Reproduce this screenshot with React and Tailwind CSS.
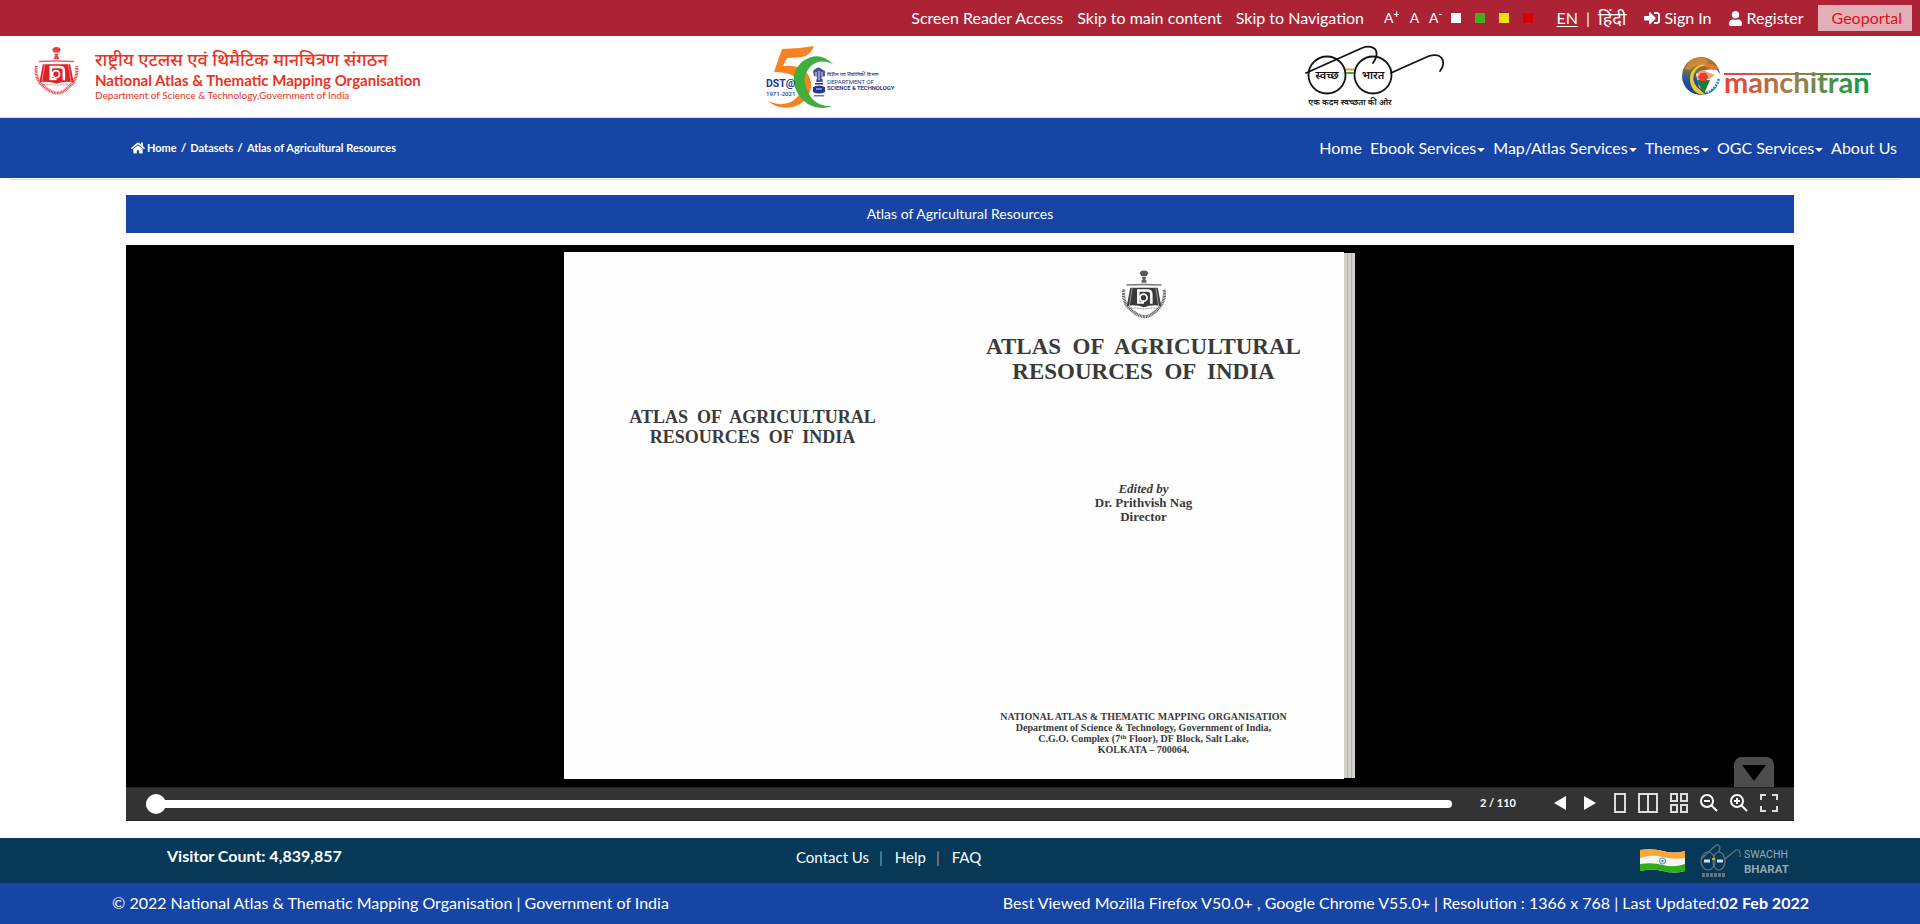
import { useState } from "react";
import { FaHome, FaSignInAlt, FaUser } from "react-icons/fa";

const uiFont = "font-['Lato','Noto_Sans',sans-serif]";
const bookFont = "font-['Liberation_Serif',serif]";

function Emblem({ className, color }) {
  return (
    <svg viewBox="0 0 46 50" className={className} aria-hidden="true">
      <g fill={color}>
        <path d="M19.500 1.500q3.500-2 7 0l.8 2-1.500 2.500h-5.600l-1.500-2.500z" opacity=".85" />
        <path d="M21 7h4v1.500l-.8 1 1.300 1.500v2h-5v-2l1.300-1.500-.8-1z" opacity=".8" />
        <path d="M5 14.500q18-1 36 0v1.500q-18-.8-36 0z" opacity=".7" />
        <path d="M9 18h28l3.500 18.500q-10-1.500-17.500 1.500-7.500-3-17.500-1.500z" />
      </g>
      <path d="M11 18 8 36.500M35 18 38 36.500" stroke="#fff" strokeWidth=".7" fill="none" opacity=".7" />
      <path d="M9 39q8-.5 14 1 6-1.500 14-1" stroke={color} strokeWidth=".8" fill="none" strokeDasharray="2 1" opacity=".7" />
      <path d="M16 21h10.500q4 0 4 4V34.500" stroke="#fff" strokeWidth="2.600" fill="none" />
      <path d="M17.200 20v14" stroke="#fff" strokeWidth="2.600" />
      <path d="M16 33.300h7" stroke="#fff" strokeWidth="2.200" />
      <circle cx="22.500" cy="28.200" r="3.600" fill={color} stroke="#fff" strokeWidth="1.800" />
      <path
        d="M2.500 20q-2 12 6 19.500T23 47.500t14.500-8T43.500 20"
        fill="none"
        stroke={color}
        strokeWidth="3.200"
        strokeDasharray="1 .6"
        opacity=".85"
      />
    </svg>
  );
}

function DstLogo() {
  return (
    <svg viewBox="0 0 130 64" className="h-16 w-[130px]" role="img" aria-label="DST 50 years">
      <path d="M16 3Q32 3 48 0 45 9 36 11L21 12l-4 8q24-2 28 16 1 19-18 25-15 3-25-6 10 5 20 2 14-5 12-17Q32 26 8 26z" fill="#f68222" />
      <path d="M67 18Q53 4 37 15 22 28 31 46q8 15 25 16 6 0 10-2-16 1-23-12-9-16 1-27 9-9 23-3z" fill="#3fae3b" />
      <g fill="#26378b" className="font-['Roboto',sans-serif]">
        <text x="0" y="41" fontSize="10.500" fontWeight="700">DST@</text>
        <text x="0" y="50" fontSize="6" fontWeight="500">1971-2021</text>
        <text x="61" y="30" fontSize="5" fontWeight="500" className="font-['Noto_Sans',sans-serif]">विज्ञान एवं प्रौद्योगिकी विभाग</text>
        <text x="61" y="38" fontSize="6">DEPARTMENT OF</text>
        <text x="61" y="44" fontSize="5.800" fontWeight="700">SCIENCE &amp; TECHNOLOGY</text>
        <path d="M48 24q4-5 9 0l2 1v5l-3 1 1 5h-7l1-5-3-1-1-5z" opacity=".85" />
        <rect x="49" y="37" width="8" height="1.500" />
        <path d="M47 41q6-3 12 0v5q-6 3-12 0z" />
        <rect x="48" y="49" width="10" height="1.500" opacity=".7" />
      </g>
      <path d="M50 26v7M53 25v9M56 26v7M50 43h6" stroke="#fff" strokeWidth=".8" />
    </svg>
  );
}

function SwachhGlasses() {
  return (
    <svg viewBox="0 0 144 64" className="h-16 w-36" role="img" aria-label="Swachh Bharat">
      <g fill="none" stroke="#111" strokeWidth="1.800" strokeLinecap="round">
        <circle cx="22" cy="30" r="18.500" />
        <circle cx="68" cy="30" r="18.500" />
        <path d="M1 28 57 3q8-3 13 1 4 5-2 14" />
        <path d="M86 28q22-10 38-17 12-3 14 5 1 5-3 10" />
      </g>
      <path d="M41 24.500h8" stroke="#f7941d" strokeWidth="2" />
      <path d="M41 28h8" stroke="#39a94a" strokeWidth="2" />
      <g className="font-['Noto_Sans',sans-serif]" fill="#111" textAnchor="middle">
        <text x="22" y="34" fontSize="11" fontWeight="600">स्वच्छ</text>
        <text x="68" y="34" fontSize="11" fontWeight="600">भारत</text>
        <text x="45" y="60" fontSize="8.300" fontWeight="600">एक कदम स्वच्छता की ओर</text>
      </g>
    </svg>
  );
}

function Manchitran() {
  return (
    <svg viewBox="0 0 192 42" className="h-[42px] w-48" role="img" aria-label="Manchitran">
      <defs>
        <linearGradient id="mc" x1="44" x2="190" y1="0" y2="0" gradientUnits="userSpaceOnUse">
          <stop offset="0" stopColor="#ee3e3e" />
          <stop offset=".45" stopColor="#a08048" />
          <stop offset="1" stopColor="#0a9a48" />
        </linearGradient>
        <linearGradient id="globe" x1="0" x2="0" y1="0" y2="1">
          <stop offset="0" stopColor="#c0702a" />
          <stop offset=".35" stopColor="#76703f" />
          <stop offset=".6" stopColor="#1c57a5" />
          <stop offset="1" stopColor="#123f8a" />
        </linearGradient>
      </defs>
      <circle cx="20" cy="20" r="19" fill="url(#globe)" />
      <path d="M8 6q8-5 16-4l4 5-8 4-6-1-5 4-5-1z" fill="#c98a3c" />
      <path d="M36 12Q22 6 15 14q-6 9 1 17l9 8q-14 0-16-14-1-9 6-14 9-6 21 1z" fill="#f7c52b" />
      <path d="M24 8q8-2 13 4l-3 3-10-4z" fill="#e8752b" />
      <path d="M15 18q8-6 21-4l4 6-3 9-11 9-8-7z" fill="#fff" />
      <path d="M17 16q6-4 9 0l8 3-6 4-12 1z" fill="#f0a070" />
      <path d="M15 24h14l-6 14z" fill="#1e7c3a" />
      <path d="M17 21l3-4h5l2 4-2 4h-6z" fill="#e83c35" />
      <path d="M25 37q10-3 13-15" fill="none" stroke="#2b86c9" strokeWidth="2.500" strokeDasharray="2 1" />
      <path d="M43 18.010 190 18" stroke="url(#mc)" strokeWidth="2" />
      <text x="43" y="37" fontSize="29" fontWeight="700" fill="url(#mc)" className="font-['Lato',sans-serif]">manchitran</text>
    </svg>
  );
}

function TopBar() {
  return (
    <div className="flex h-9 items-center justify-end bg-[#ac2336] pr-2 text-base whitespace-nowrap text-white">
      <div className="flex gap-[14px]">
        <a href="#reader">Screen Reader Access</a>
        <a href="#main">Skip to main content</a>
        <a href="#nav">Skip to Navigation</a>
      </div>
      <div className="ml-5 flex items-center gap-[10px] text-sm">
        <button aria-label="Increase text size">A<sup>+</sup></button>
        <button aria-label="Normal text size">A</button>
        <button aria-label="Decrease text size">A<sup>-</sup></button>
      </div>
      <div className="ml-2 flex items-center gap-[14px]">
        <button aria-label="White theme" className="size-[10px] bg-white" />
        <button aria-label="Green theme" className="size-[10px] bg-[#45ad24]" />
        <button aria-label="Yellow theme" className="size-[10px] bg-[#f0e010]" />
        <button aria-label="Red theme" className="size-[10px] bg-[#d80000]" />
      </div>
      <div className="ml-6 flex items-center gap-2">
        <a href="#en" className="underline underline-offset-2">EN</a>
        <span>|</span>
        <a href="#hi" className="text-lg">हिंदी</a>
      </div>
      <a href="#signin" className="ml-[18px] flex items-center gap-1"><FaSignInAlt className="size-4" />Sign In</a>
      <a href="#register" className="ml-4 flex items-center gap-1"><FaUser className="size-[15px]" />Register</a>
      <a href="#geo" className="ml-[14px] bg-[#e3afb7] py-px pr-[10px] pl-[14px] text-[#e01020]">Geoportal</a>
    </div>
  );
}

function Header() {
  return (
    <header className="grid h-[82px] grid-cols-[732fr_539fr_376fr_192fr] items-start border-b border-[#dcdcdc] pr-[47px] pl-[34px]">
      <div className="flex gap-4 pt-[10px]">
        <Emblem className="h-[50px] w-[45px]" color="#de2127" />
        <div className="pt-px whitespace-nowrap text-[#ea3323]">
          <p className="text-lg leading-6 font-medium">राष्ट्रीय एटलस एवं थिमैटिक मानचित्रण संगठन</p>
          <p className="text-[15px] leading-[18px] font-bold">National Atlas &amp; Thematic Mapping Organisation</p>
          <p className="text-[10px] leading-3">Department of Science &amp; Technology,Government of India</p>
        </div>
      </div>
      <div className="pt-[10px]"><DstLogo /></div>
      <div className="pt-[9px]"><SwachhGlasses /></div>
      <div className="pt-5"><Manchitran /></div>
    </header>
  );
}

const menu = [
  ["Home", false],
  ["Ebook Services", true],
  ["Map/Atlas Services", true],
  ["Themes", true],
  ["OGC Services", true],
  ["About Us", false],
];

function NavBar() {
  return (
    <div className="flex h-[60px] items-center justify-between bg-[#1745a5] pr-[23px] pl-[131px] text-white">
      <nav aria-label="Breadcrumb" className="flex items-center gap-1 text-[11px] font-bold">
        <a href="#home" className="flex items-center gap-[2px]"><FaHome className="size-[14px]" />Home</a>
        <span className="text-xs">/</span>
        <a href="#datasets">Datasets</a>
        <span className="text-xs">/</span>
        <span>Atlas of Agricultural Resources</span>
      </nav>
      <nav id="nav" className="flex items-center gap-2 text-base">
        {menu.map(([label, hasMenu]) => (
          <a key={label} href="#menu" className="flex items-center gap-px">
            {label}
            {hasMenu && <svg viewBox="0 0 8 4" className="mt-1 h-1 w-2" fill="currentColor"><path d="M0 0h8L4 4z" /></svg>}
          </a>
        ))}
      </nav>
    </div>
  );
}

function Book() {
  return (
    <div className="flex items-start">
      <div className={`grid h-[527px] w-[780px] grid-cols-2 bg-[#fefefe] text-center font-bold whitespace-pre text-[#3a3a3a] ${bookFont}`}>
        <div className="pt-[155px] pr-3">
          <p className="text-lg leading-5">ATLAS  OF  AGRICULTURAL{"\n"}RESOURCES  OF  INDIA</p>
        </div>
        <div className="flex flex-col items-center pt-[18px] pr-[10px]">
          <Emblem className="h-[49px] w-[46px]" color="#3a3a3a" />
          <h1 className="pt-[15px] text-[23px] leading-[25px]">ATLAS  OF  AGRICULTURAL{"\n"}RESOURCES  OF  INDIA</h1>
          <div className="pt-[98px] text-[13px] leading-[14px]">
            <p className="italic">Edited by</p>
            <p>Dr. Prithvish Nag</p>
            <p>Director</p>
          </div>
          <div className="pt-[187px] text-[10px] leading-[11px]">
            <p>NATIONAL ATLAS &amp; THEMATIC MAPPING ORGANISATION</p>
            <p>Department of Science &amp; Technology, Government of India,</p>
            <p>C.G.O. Complex (7<sup className="text-[7px]">th</sup> Floor), DF Block, Salt Lake,</p>
            <p>KOLKATA – 700064.</p>
          </div>
        </div>
      </div>
      <div className="mt-px h-[525px] w-[11px] bg-[repeating-linear-gradient(90deg,#d2d0cb_0_3px,#b5b3ae_3px_4px)]" />
    </div>
  );
}

function Toolbar() {
  const [page, setPage] = useState(2);
  return (
    <div className="flex h-[34px] items-center border-y border-[#222] bg-[#333] pr-4 pl-5 text-white">
      <input
        type="range"
        aria-label="Page"
        min="2"
        max="110"
        value={page}
        onChange={(e) => setPage(Number(e.target.value))}
        className="h-2 flex-1 appearance-none rounded-full bg-white [&::-webkit-slider-thumb]:size-5 [&::-webkit-slider-thumb]:appearance-none [&::-webkit-slider-thumb]:rounded-full [&::-webkit-slider-thumb]:bg-white"
      />
      <span className="ml-7 w-[74px] pb-[2px] text-[11px] font-bold">{page} / 110</span>
      <div className="flex items-center gap-3 pb-[2px] [&_svg]:block">
        <button aria-label="Previous page" className="mr-[6px]">
          <svg viewBox="0 0 12 14" className="h-[14px] w-3" fill="#fff"><path d="M12 0v14L0 7z" /></svg>
        </button>
        <button aria-label="Next page" className="mr-[6px]">
          <svg viewBox="0 0 12 14" className="h-[14px] w-3" fill="#fff"><path d="M0 0v14l12-7z" /></svg>
        </button>
        <button aria-label="Single page">
          <svg viewBox="0 0 12 20" className="h-5 w-3" fill="none" stroke="#ddd" strokeWidth="2"><rect x="1" y="1" width="10" height="18" /></svg>
        </button>
        <button aria-label="Two pages">
          <svg viewBox="0 0 20 20" className="size-5" fill="none" stroke="#ddd" strokeWidth="2"><path d="M1 1h18v18H1zM10 1v18" /></svg>
        </button>
        <button aria-label="Thumbnails">
          <svg viewBox="0 0 18 20" className="h-5 w-[18px]" fill="none" stroke="#ddd" strokeWidth="2"><path d="M1 1h6v7H1zM11 1h6v7h-6zM1 12h6v7H1zM11 12h6v7h-6z" /></svg>
        </button>
        <button aria-label="Zoom out">
          <svg viewBox="0 0 18 18" className="size-[18px]" fill="none" stroke="#fff" strokeWidth="2"><circle cx="7" cy="7" r="6" /><path d="M4 7h6M11 11l6 6" /></svg>
        </button>
        <button aria-label="Zoom in">
          <svg viewBox="0 0 18 18" className="size-[18px]" fill="none" stroke="#fff" strokeWidth="2"><circle cx="7" cy="7" r="6" /><path d="M4 7h6M7 4v6M11 11l6 6" /></svg>
        </button>
        <button aria-label="Fullscreen">
          <svg viewBox="0 0 18 18" className="size-[18px]" fill="none" stroke="#ddd" strokeWidth="2"><path d="M1 6V1h5M12 1h5v5M17 12v5h-5M6 17H1v-5" /></svg>
        </button>
      </div>
    </div>
  );
}

function Viewer() {
  return (
    <section className="mt-3">
      <div className="relative flex h-[542px] justify-center bg-black pt-[7px] pr-[2px]">
        <Book />
        <button aria-label="Hide toolbar" className="absolute right-5 bottom-0 flex h-[30px] w-10 justify-center rounded-t-lg bg-[#4d4d4d] pt-2">
          <svg viewBox="0 0 24 16" className="h-4 w-6"><path d="M0 0h24L12 16z" /></svg>
        </button>
      </div>
      <Toolbar />
    </section>
  );
}

function Flag() {
  return (
    <svg viewBox="0 0 45 24" className="h-6 w-[45px]" role="img" aria-label="Flag of India">
      <path d="M0 1q12-2 23 1t22 0v20q-11 3-22 0T0 22z" fill="#f4f4f0" />
      <path d="M0 1q12-2 23 1t22 0v7q-11 2-22-1T0 9z" fill="#f8a83a" />
      <path d="M0 15q12-2 23 1t22-1v7q-11 3-22 0T0 22z" fill="#2fad18" />
      <circle cx="22.500" cy="12" r="3" fill="none" stroke="#3d8fb5" strokeWidth="1" />
      <circle cx="22.500" cy="12" r="1.200" fill="#3d8fb5" />
    </svg>
  );
}

function SwachhFooter() {
  return (
    <svg viewBox="0 0 90 36" className="h-9 w-[90px]" role="img" aria-label="Swachh Bharat">
      <g fill="none" stroke="#66767d" strokeWidth="1.200">
        <ellipse cx="8" cy="18" rx="7" ry="9" />
        <ellipse cx="19" cy="18" rx="6" ry="9" />
        <path d="M1 16 15 3q4-3 5 2l-1 4M25 16l11-9q5-1 4 7" />
      </g>
      <path d="M4 18h6M17 18h6" stroke="#d0dde4" strokeWidth="3" />
      <path d="M12 16h3" stroke="#d9a53a" strokeWidth="2" />
      <path d="M2 32h24" stroke="#66767d" strokeWidth="4" strokeDasharray="3 1" />
      <g className="font-['Roboto',sans-serif]" fill="#9aa5b0">
        <text x="44" y="15" fontSize="10.500" fontWeight="400">SWACHH</text>
        <text x="44" y="30" fontSize="11.500" fontWeight="700">BHARAT</text>
      </g>
    </svg>
  );
}

export default function App() {
  return (
    <div className={`min-h-screen bg-white ${uiFont}`}>
      <TopBar />
      <Header />
      <NavBar />
      <div className="mr-5 ml-[10px] h-[2px] border-b border-[#d8d8d8]" />
      <main id="main" className="px-[126px] pt-[15px] pb-[17px]">
        <h2 className="flex h-[38px] items-center justify-center bg-[#1745a5] text-sm text-white">Atlas of Agricultural Resources</h2>
        <Viewer />
      </main>
      <footer className="text-base whitespace-nowrap text-white">
        <div className="grid h-[45px] grid-cols-[629fr_600fr_394fr] bg-[#063857] pr-[130px] pl-[167px]">
          <p className="pt-[6px] font-bold">Visitor Count: 4,839,857</p>
          <div className="flex items-start gap-[10px] pt-2 text-[15px]">
            <a href="#contact">Contact Us</a>
            <span className="text-[#8fa3b0]">|</span>
            <a href="#help" className="pl-[2px]">Help</a>
            <span className="text-[#8fa3b0]">|</span>
            <a href="#faq" className="pl-[2px]">FAQ</a>
          </div>
          <div className="flex items-center justify-end gap-[15px]">
            <Flag />
            <SwachhFooter />
          </div>
        </div>
        <div className="flex h-[41px] items-center justify-between bg-[#1745a5] pr-[111px] pb-[2px] pl-28">
          <p>© 2022 National Atlas &amp; Thematic Mapping Organisation | Government of India</p>
          <p>Best Viewed Mozilla Firefox V50.0+ , Google Chrome V55.0+ | Resolution : 1366 x 768 | Last Updated:<b>02 Feb 2022</b></p>
        </div>
      </footer>
    </div>
  );
}
